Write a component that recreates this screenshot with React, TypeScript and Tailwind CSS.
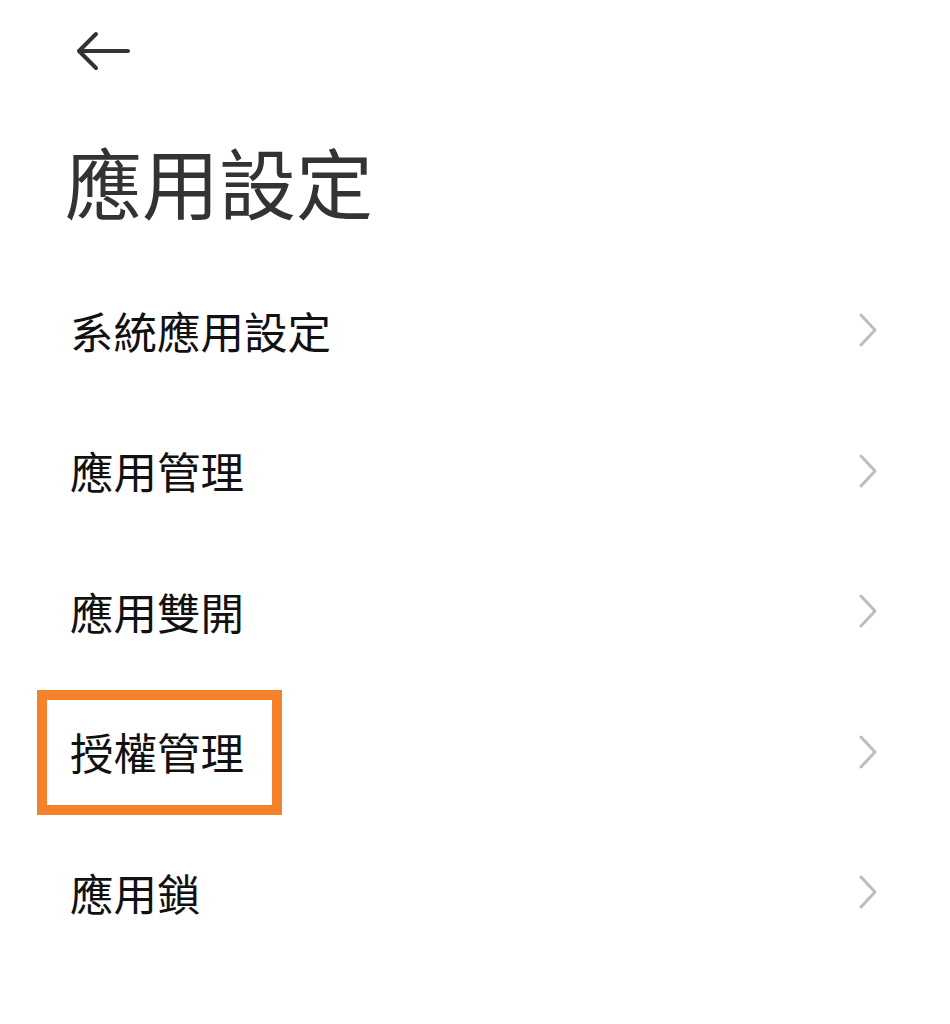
import React from "react";

const items = ["系統應用設定", "應用管理", "應用雙開", "授權管理", "應用鎖"];

function Chevron() {
  return (
    <svg width="20" height="34" viewBox="0 0 20 34" fill="none">
      <path d="M3 2 L17 17 L3 32" stroke="#bdbdbd" strokeWidth="3" strokeLinecap="round" strokeLinejoin="round" />
    </svg>
  );
}

export default function App() {
  return (
    <div
      className="w-[950px] h-[1024px] bg-white relative overflow-hidden"
      style={{ fontFamily: '"Noto Sans CJK TC", "Noto Sans", sans-serif' }}
    >
      <div className="pl-[76px] pt-[31px] h-[126px]">
        <svg width="54" height="40" viewBox="0 0 54 40" fill="none">
          <path d="M52 20 H4 M20 3 L3 20 L20 37" stroke="#333333" strokeWidth="4" strokeLinecap="round" strokeLinejoin="round" />
        </svg>
      </div>
      <h1 className="pl-[65px] text-[77px] leading-[110px] text-[#333333] font-normal">應用設定</h1>
      <div className="mt-[24px] flex flex-col">
        {items.map((t) => (
          <div key={t} className="relative h-[140.5px] flex items-center justify-between pl-[70px] pr-[72px]">
            <span className="text-[43.5px] text-[#111111] leading-none">{t}</span>
            <Chevron />
            {t === "授權管理" && (
              <div className="absolute left-[37px] top-[8px] w-[245px] h-[125px] border-[10px] border-[#f5822a]" />
            )}
          </div>
        ))}
      </div>
    </div>
  );
}
